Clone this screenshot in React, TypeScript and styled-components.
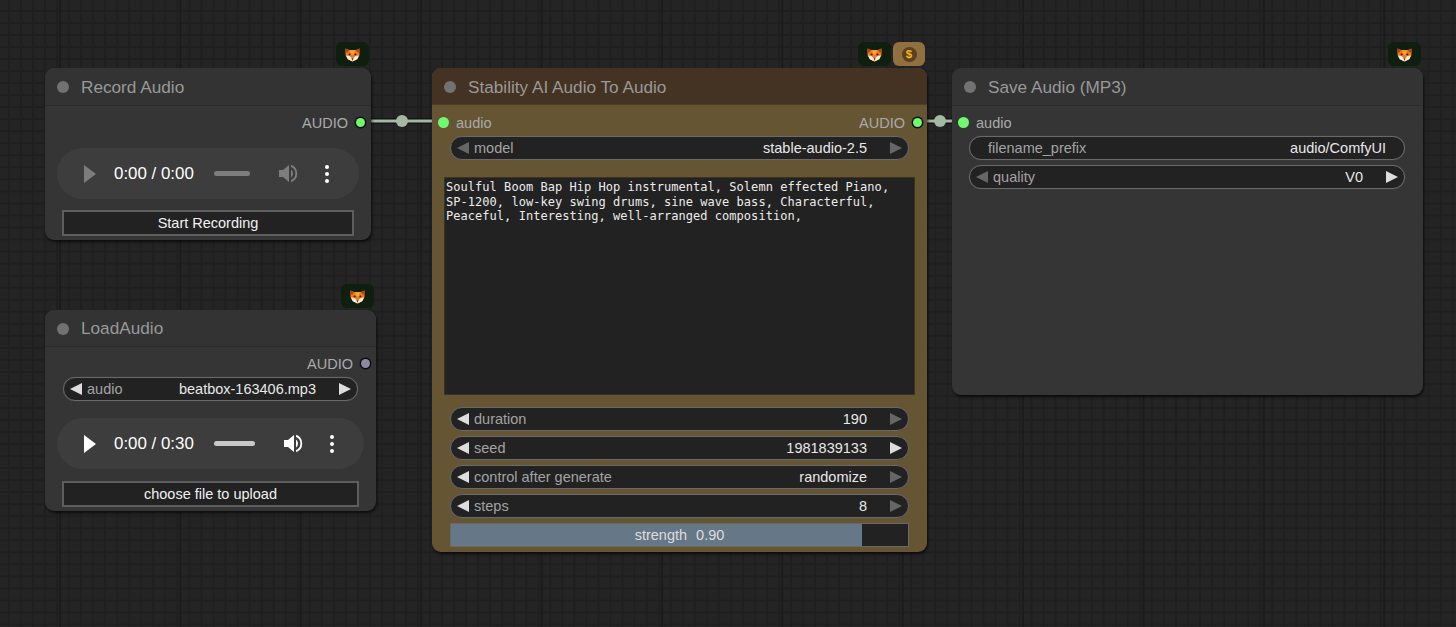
import React from "react";
import styled, { createGlobalStyle } from "styled-components";

const Global = createGlobalStyle`
  html, body { margin: 0; padding: 0; width: 100%; height: 100%; overflow: hidden; background: #222; }
  #root { width: 100%; height: 100%; }
  * { box-sizing: border-box; }
`;

const Canvas = styled.div`
  position: relative;
  width: 1456px;
  height: 627px;
  overflow: hidden;
  font-family: "Liberation Sans", Arial, sans-serif;
  background-color: #242424;
  background-image:
    linear-gradient(to right, #1b1b1b 2px, transparent 2px),
    linear-gradient(to right, #1f1f1f 2px, transparent 2px),
    linear-gradient(to bottom, #1f1f1f 2px, transparent 2px);
  background-size: 120.4px 120.4px, 12.04px 12.04px, 12.04px 12.04px;
  background-position: 59px 0, 8px 0, 0 10px;
`;

const Wires = styled.svg`
  position: absolute;
  inset: 0;
  width: 1456px;
  height: 627px;
`;

const Node = styled.section<{ $x: number; $y: number; $w: number; $h: number; $brown?: boolean }>`
  position: absolute;
  left: ${(p) => p.$x}px;
  top: ${(p) => p.$y}px;
  width: ${(p) => p.$w}px;
  height: ${(p) => p.$h}px;
  border-radius: 9px;
  background: ${(p) => (p.$brown ? "#665533" : "#353535")};
  box-shadow: 1px 2px 3px rgba(0, 0, 0, 0.65);
`;

const Title = styled.header<{ $brown?: boolean; $h?: number; $pt?: number }>`
  display: flex;
  align-items: center;
  height: ${(p) => p.$h ?? 38}px;
  padding: ${(p) => p.$pt ?? 1}px 0 0 12px;
  gap: 12px;
  border-radius: 9px 9px 0 0;
  background: ${(p) => (p.$brown ? "#443322" : "#333333")};
  border-bottom: 1px solid ${(p) => (p.$brown ? "#4d3e27" : "#2b2b2b")};
  color: #999;
  font-size: 17.2px;
  white-space: nowrap;
`;

const Led = styled.span`
  width: 12px;
  height: 12px;
  border-radius: 50%;
  background: #727272;
  flex: none;
`;

const Badges = styled.div`
  position: absolute;
  right: 2px;
  bottom: 100%;
  margin-bottom: 2px;
  display: flex;
  gap: 2px;
`;

const Badge = styled.div<{ $gold?: boolean }>`
  width: ${(p) => (p.$gold ? 32 : 33)}px;
  height: 24px;
  border-radius: 6px;
  display: flex;
  align-items: center;
  justify-content: center;
  background: ${(p) => (p.$gold ? "#8f703e" : "#0f1f0f")};
`;

const Coin = styled.span`
  width: 15px;
  height: 15px;
  border-radius: 50%;
  background: #5a3f23;
  color: #f4b91f;
  font-size: 11.5px;
  font-weight: 700;
  line-height: 15px;
  text-align: center;
`;

const SlotRow = styled.div<{ $mt?: number; $align?: string }>`
  display: flex;
  align-items: center;
  justify-content: ${(p) => p.$align ?? "flex-end"};
  height: 20px;
  margin-top: ${(p) => p.$mt ?? 7}px;
  color: #aaa;
  font-size: 14.5px;
`;

const SlotPair = styled.span<{ $out?: boolean; $pad?: number }>`
  display: flex;
  align-items: center;
  gap: ${(p) => (p.$out ? 6.5 : 7)}px;
  ${(p) => (p.$out ? `margin-right: ${p.$pad ?? 5.5}px;` : "margin-left: 6px;")}
`;

const Dot = styled.span<{ $color?: string; $ring?: boolean }>`
  width: ${(p) => (p.$ring ? 9 : 11)}px;
  height: ${(p) => (p.$ring ? 9 : 11)}px;
  border-radius: 50%;
  flex: none;
  margin: ${(p) => (p.$ring ? "-2px 1px 0" : "-2px 0 0")};
  background: ${(p) => p.$color ?? "#70f870"};
  box-shadow: ${(p) => (p.$ring ? "0 0 0 1.4px #0c0c0c" : "none")};
`;

const Stack = styled.div<{ $mt?: number; $left?: number }>`
  display: flex;
  flex-direction: column;
  gap: 5px;
  margin: ${(p) => p.$mt ?? 3}px 18px 0 ${(p) => p.$left ?? 18}px;
`;

const WidgetBox = styled.div<{ $plain?: boolean }>`
  display: flex;
  align-items: center;
  height: 24px;
  padding: ${(p) => (p.$plain ? "0 18px" : "0 6px")};
  border: 1px solid #6a6a6a;
  border-radius: 12px;
  background: #222;
  box-shadow: 0 0 1px #5a5a5a;
  font-size: 14.5px;
  white-space: nowrap;
`;

const WidgetLabel = styled.span`
  flex: 1;
  color: #a2a2a2;
`;

const WidgetValue = styled.span<{ $arrows?: boolean }>`
  color: #e8e8e8;
  margin-right: ${(p) => (p.$arrows ? 23 : 0)}px;
`;

const Arrow = styled.span<{ $dir: "l" | "r"; $on?: boolean }>`
  width: 0;
  height: 0;
  flex: none;
  border-top: 6px solid transparent;
  border-bottom: 6px solid transparent;
  ${(p) => (p.$dir === "l" ? "border-right" : "border-left")}: 12px solid ${(p) => (p.$on ? "#dddddd" : "#666666")};
  ${(p) => (p.$dir === "l" ? "margin-right: 5px;" : "")}
`;

const Prompt = styled.div`
  margin: 17px 12px 0;
  height: 218px;
  padding: 2px 1px;
  background: #222;
  border: 1px solid #3a3320;
  color: #ececec;
  font-family: "DejaVu Sans Mono", monospace;
  font-size: 12px;
  letter-spacing: 0.04px;
  line-height: 14.7px;
  white-space: pre;
`;

const Slider = styled.div`
  position: relative;
  height: 24px;
  border: 1px solid #6a6a6a;
  background: #222;
  display: flex;
  align-items: center;
  justify-content: center;
  gap: 9px;
  font-size: 14.5px;
  color: #dddddd;
`;

const SliderFill = styled.div`
  position: absolute;
  left: 0;
  top: 0;
  bottom: 0;
  background: #667788;
`;

const SliderText = styled.span`
  position: relative;
`;

const Player = styled.div<{ $mt: number; $off?: boolean }>`
  display: flex;
  align-items: center;
  height: 51px;
  margin: ${(p) => p.$mt}px 12px 0;
  padding: 0 30px 0 27px;
  border-radius: 26px;
  background: #3d3d3d;
  color: #fff;
  font-size: 16.9px;
  --ctl: ${(p) => (p.$off ? "#7d7d7d" : "#ffffff")};
`;

const PlayIcon = styled.svg`
  width: 12px;
  height: 18px;
  flex: none;
  fill: var(--ctl);
`;

const Time = styled.span`
  margin-left: 18px;
  width: 80px;
  white-space: nowrap;
  flex: none;
`;

const Track = styled.span<{ $off?: boolean }>`
  flex: 1;
  height: 5px;
  margin: 0 29px 0 20px;
  border-radius: 3px;
  background: ${(p) => (p.$off ? "#7d7d7d" : "#c9c9c9")};
`;

const Speaker = styled.svg`
  width: 19px;
  height: 19px;
  flex: none;
  fill: var(--ctl);
`;

const Kebab = styled.svg`
  width: 4px;
  height: 18px;
  margin-left: 27px;
  flex: none;
  fill: #fff;
`;

const FileButton = styled.div<{ $mt: number }>`
  height: 26px;
  margin: ${(p) => p.$mt}px 17px 0;
  border: 2px solid #5e5e5e;
  background: #222;
  color: #f0f0f0;
  font-size: 14.5px;
  line-height: 22px;
  text-align: center;
`;

const Fox = () => (
  <svg width="15" height="15" viewBox="0 0 15 15" aria-hidden="true">
    <path d="M0.5 1.5 L4 3 L11 3 L14.5 1.5 L14.5 8 L12.5 12 L7.5 14.5 L2.5 12 L0.5 8 Z" fill="#ee7a1c" />
    <path d="M0.5 1.5 L4 3 L2.5 5.5 L0.5 5.5 Z" fill="#a84a16" />
    <path d="M14.5 1.5 L11 3 L12.5 5.5 L14.5 5.5 Z" fill="#a84a16" />
    <path d="M5 3.2 L10 3.2 L8.6 7.5 L6.4 7.5 Z" fill="#ffa334" />
    <path d="M1 8.6 L4.5 9 L6.5 11 L7.5 14.5 L2.8 12.2 Z" fill="#f8efe4" />
    <path d="M14 8.6 L10.5 9 L8.5 11 L7.5 14.5 L12.2 12.2 Z" fill="#f8efe4" />
    <ellipse cx="4.6" cy="7.4" rx="1" ry="0.9" fill="#2a1408" />
    <ellipse cx="10.4" cy="7.4" rx="1" ry="0.9" fill="#2a1408" />
    <path d="M6.5 11.4 L8.5 11.4 L7.5 13 Z" fill="#2a1408" />
  </svg>
);

const Controls = ({ time, off }: { time: string; off?: boolean }) => (
  <>
    <PlayIcon viewBox="0 0 12 18"><polygon points="0,0 12,9 0,18" /></PlayIcon>
    <Time>{time}</Time>
    <Track $off={off} />
    <Speaker viewBox="0 0 19 19">
      <polygon points="0,6 4,6 10,1 10,18 4,13 0,13" />
      <path d="M12 5.5a5 5 0 0 1 0 8z" />
      <path d="M12 0.8a9.2 9.2 0 0 1 0 17.4v-2.2a7 7 0 0 0 0-13z" />
    </Speaker>
    <Kebab viewBox="0 0 4 18">
      <circle cx="2" cy="2" r="2" />
      <circle cx="2" cy="9" r="2" />
      <circle cx="2" cy="16" r="2" />
    </Kebab>
  </>
);

const Widget = ({ label, value, left, right }: { label: string; value: string; left?: boolean; right?: boolean }) => (
  <WidgetBox>
    <Arrow $dir="l" $on={left} />
    <WidgetLabel>{label}</WidgetLabel>
    <WidgetValue $arrows>{value}</WidgetValue>
    <Arrow $dir="r" $on={right} />
  </WidgetBox>
);

const Wire = ({ x1, x2, y }: { x1: number; x2: number; y: number }) => (
  <g>
    <line x1={x1} x2={x2} y1={y} y2={y} stroke="#0b0b0b" strokeWidth="5" />
    <line x1={x1} x2={x2} y1={y} y2={y} stroke="#a4b8a4" strokeWidth="3" />
    <circle cx={(x1 + x2) / 2} cy={y} r="6" fill="#a4b8a4" />
  </g>
);

const prompt = `Soulful Boom Bap Hip Hop instrumental, Solemn effected Piano,
SP-1200, low-key swing drums, sine wave bass, Characterful,
Peaceful, Interesting, well-arranged composition,`;

export default function App() {
  return (
    <Canvas>
      <Global />
      <Wires viewBox="0 0 1456 627">
        <Wire x1={371} x2={433} y={121} />
        <Wire x1={927} x2={953} y={121} />
      </Wires>

      <Node $x={45} $y={68} $w={326} $h={172}>
        <Badges><Badge><Fox /></Badge></Badges>
        <Title><Led />Record Audio</Title>
        <SlotRow><SlotPair $out>AUDIO<Dot $ring /></SlotPair></SlotRow>
        <Player $mt={15} $off><Controls time="0:00 / 0:00" off /></Player>
        <FileButton $mt={11}>Start Recording</FileButton>
      </Node>

      <Node $x={45} $y={310} $w={331} $h={201}>
        <Badges><Badge><Fox /></Badge></Badges>
        <Title $h={37}><Led />LoadAudio</Title>
        <SlotRow><SlotPair $out>AUDIO<Dot $ring $color="#8a8aa2" /></SlotPair></SlotRow>
        <Stack>
          <Widget label="audio" value="beatbox-163406.mp3" left right />
        </Stack>
        <Player $mt={17}><Controls time="0:00 / 0:30" /></Player>
        <FileButton $mt={12}>choose file to upload</FileButton>
      </Node>

      <Node $x={432} $y={68} $w={495} $h={484} $brown>
        <Badges>
          <Badge><Fox /></Badge>
          <Badge $gold><Coin>$</Coin></Badge>
        </Badges>
        <Title $brown $h={37} $pt={2}><Led />Stability AI Audio To Audio</Title>
        <SlotRow $mt={8} $align="space-between">
          <SlotPair><Dot />audio</SlotPair>
          <SlotPair $out $pad={4.5}>AUDIO<Dot $ring /></SlotPair>
        </SlotRow>
        <Stack>
          <Widget label="model" value="stable-audio-2.5" />
        </Stack>
        <Prompt>{prompt}</Prompt>
        <Stack $mt={12}>
          <Widget label="duration" value="190" left />
          <Widget label="seed" value="1981839133" left right />
          <Widget label="control after generate" value="randomize" left />
          <Widget label="steps" value="8" left />
          <Slider>
            <SliderFill style={{ width: `${0.9 * 100}%` }} />
            <SliderText>strength</SliderText>
            <SliderText>0.90</SliderText>
          </Slider>
        </Stack>
      </Node>

      <Node $x={952} $y={68} $w={471} $h={327}>
        <Badges><Badge><Fox /></Badge></Badges>
        <Title><Led />Save Audio (MP3)</Title>
        <SlotRow $align="flex-start">
          <SlotPair><Dot />audio</SlotPair>
        </SlotRow>
        <Stack $left={17}>
          <WidgetBox $plain>
            <WidgetLabel>filename_prefix</WidgetLabel>
            <WidgetValue>audio/ComfyUI</WidgetValue>
          </WidgetBox>
          <Widget label="quality" value="V0" right />
        </Stack>
      </Node>
    </Canvas>
  );
}
